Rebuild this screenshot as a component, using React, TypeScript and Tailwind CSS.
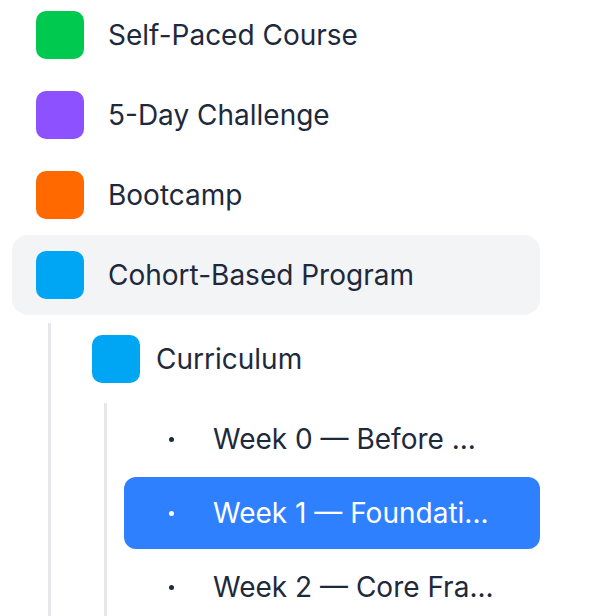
import React from 'react';

type Node = { label: string; color: string };

const topItems: Node[] = [
  { label: 'Self-Paced Course', color: 'bg-[#00c950]' },
  { label: '5-Day Challenge', color: 'bg-[#8e51ff]' },
  { label: 'Bootcamp', color: 'bg-[#ff6900]' },
];

const weeks = [
  { label: 'Week 0 — Before ...', active: false },
  { label: 'Week 1 — Foundati...', active: true },
  { label: 'Week 2 — Core Fra...', active: false },
];

function Row({ label, color, active }: Node & { active?: boolean }) {
  return (
    <div
      className={`flex h-[80px] items-center gap-6 rounded-2xl px-6 ${active ? 'bg-[#f3f4f6]' : ''}`}
    >
      <div className={`h-12 w-12 shrink-0 rounded-[10px] ${color}`} />
      <span className="text-[28px] text-[#1e293b] truncate">{label}</span>
    </div>
  );
}

export default function App() {
  return (
    <div
      className="h-[616px] w-[602px] overflow-hidden bg-white"
      style={{ fontFamily: 'Inter, "Noto Sans", sans-serif' }}
    >
      <div className="ml-3 mt-[-5px] w-[528px]">
        {topItems.map((item) => (
          <Row key={item.label} {...item} />
        ))}
        <Row label="Cohort-Based Program" color="bg-[#00a6f4]" active />

        {/* children of cohort */}
        <div className="ml-9 mt-2 border-l-[3px] border-[#e5e7eb] pl-[17px]">
          <div className="flex h-[72px] items-center gap-4 px-6">
            <div className="h-12 w-12 shrink-0 rounded-[10px] bg-[#00a6f4]" />
            <span className="text-[28px] text-[#1e293b]">Curriculum</span>
          </div>

          <div className="ml-9 mt-2 flex flex-col gap-[2px] border-l-[3px] border-[#e5e7eb] pl-[17px]">
            {weeks.map((w) => (
              <div
                key={w.label}
                className={`flex h-[72px] items-center gap-[39px] rounded-xl pl-[45px] ${
                  w.active ? 'bg-[#2f80ff] text-white' : 'text-[#1e293b]'
                }`}
              >
                <span className={`h-[5px] w-[5px] shrink-0 rounded-full ${w.active ? 'bg-white' : 'bg-[#1e293b]'}`} />
                <span className="whitespace-nowrap text-[28px]">{w.label}</span>
              </div>
            ))}
          </div>
        </div>
      </div>
    </div>
  );
}
